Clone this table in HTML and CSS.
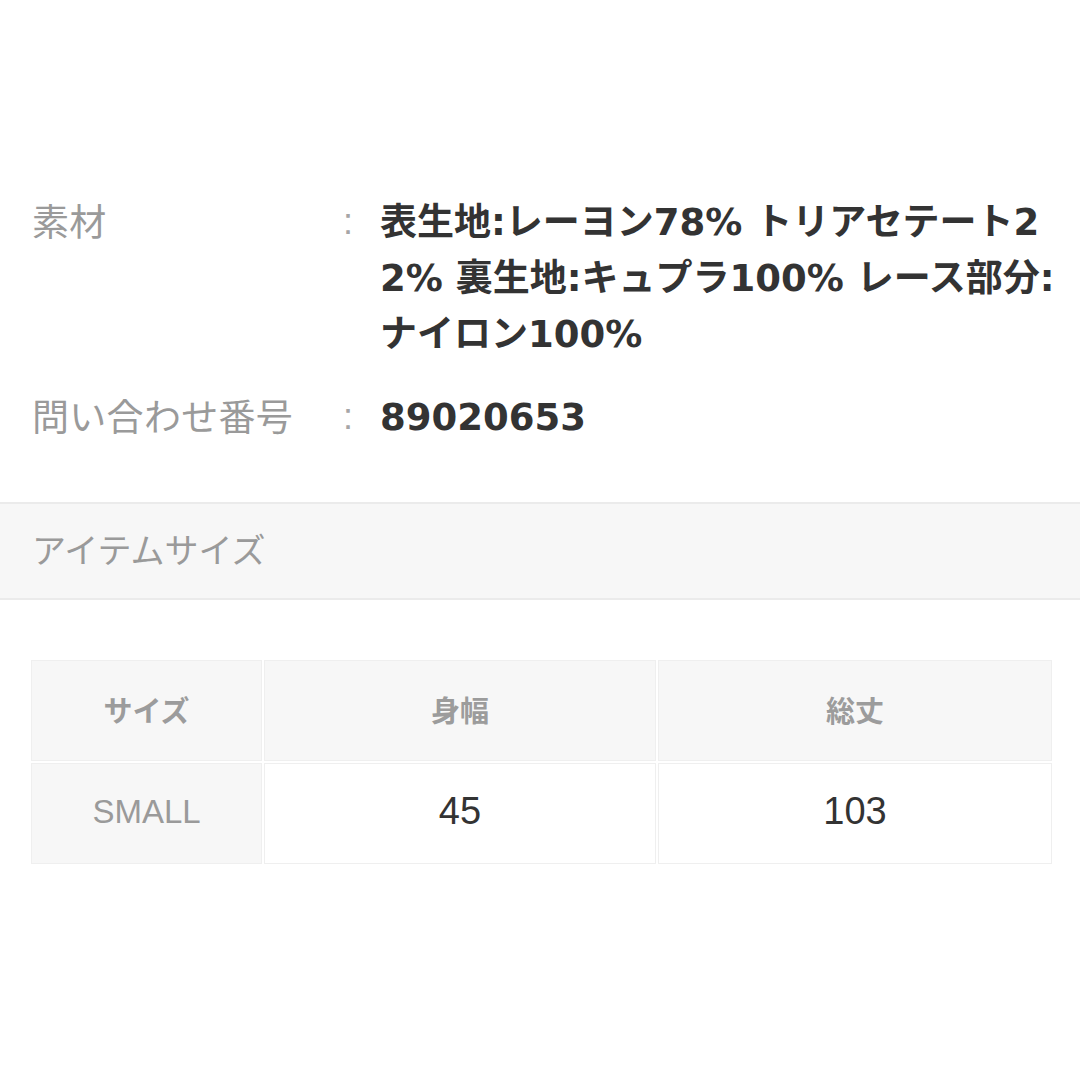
FILE: index.html
```html
<!DOCTYPE html>
<html lang="ja">
<head>
<meta charset="utf-8">
<link rel="stylesheet" href="styles.css">
</head>
<body>
<div class="page">
  <dl class="specs">
    <div class="spec-row">
      <dt class="spec-label">素材</dt>
      <dd class="spec-colon">:</dd>
      <dd class="spec-value">表生地:レーヨン78% トリアセテート22% 裏生地:キュプラ100% レース部分:ナイロン100%</dd>
    </div>
    <div class="spec-row">
      <dt class="spec-label">問い合わせ番号</dt>
      <dd class="spec-colon">:</dd>
      <dd class="spec-value">89020653</dd>
    </div>
  </dl>
  <div class="section-band">アイテムサイズ</div>
  <div class="table-wrap">
    <table class="size-table">
      <thead>
        <tr>
          <th class="col-size">サイズ</th>
          <th class="col-a">身幅</th>
          <th class="col-b">総丈</th>
        </tr>
      </thead>
      <tbody>
        <tr>
          <th class="row-head">SMALL</th>
          <td>45</td>
          <td>103</td>
        </tr>
      </tbody>
    </table>
  </div>
</div>
</body>
</html>
```

FILE: styles.css
```css
* { box-sizing: border-box; }
html, body { margin: 0; padding: 0; background: #fff; }
body {
  font-family: "Noto Sans CJK JP", "Noto Sans", sans-serif;
  color: #333;
  width: 1080px;
  height: 1080px;
  overflow: hidden;
}
.page { padding-top: 195px; }
.specs { margin: 0; padding: 0 0 0 32px; }
.spec-row {
  display: flex;
  align-items: flex-start;
  margin-bottom: 27px;
}
.spec-row:last-child { margin-bottom: 0; }
.spec-label {
  width: 302px;
  font-size: 37px;
  line-height: 50px;
  color: #9a9a9a;
  margin: 0;
  letter-spacing: 0.3px;
}
.spec-colon {
  margin: 0;
  width: 46px;
  font-family: "Liberation Sans", sans-serif;
  font-size: 36px;
  line-height: 54px;
  color: #a6a6a6;
  padding-left: 9px;
}
.spec-value {
  margin: 0;
  width: 680px;
  font-family: "DejaVu Sans", "Noto Sans CJK JP", sans-serif;
  font-size: 37px;
  line-height: 56px;
  font-weight: 700;
  color: #333;
  word-break: break-all;
}
.section-band {
  margin-top: 56px;
  height: 98px;
  background: #f7f7f7;
  border-top: 2px solid #ebebeb;
  border-bottom: 2px solid #ebebeb;
  padding-left: 32px;
  font-size: 34px;
  line-height: 90px;
  color: #9a9a9a;
}
.table-wrap { padding: 58px 26px 0 29px; }
.size-table {
  width: 1025px;
  border-collapse: separate;
  border-spacing: 2px;
  table-layout: fixed;
}
.size-table th, .size-table td {
  border: 1px solid #efefef;
  height: 101px;
  text-align: center;
  vertical-align: middle;
  padding: 0 0 4px 0;
}
.size-table thead th {
  background: #f7f7f7;
  color: #9c9c9c;
  font-size: 29px;
  font-weight: 700;
}
.col-size { width: 231px; }
.col-a { width: 392px; }
.row-head {
  background: #f7f7f7;
  color: #9a9a9a;
  font-family: "Liberation Sans", sans-serif;
  font-size: 33px;
  font-weight: 400;
}
.size-table td {
  background: #fff;
  color: #333;
  font-size: 38px;
  font-family: "Liberation Sans", sans-serif;
}
```
